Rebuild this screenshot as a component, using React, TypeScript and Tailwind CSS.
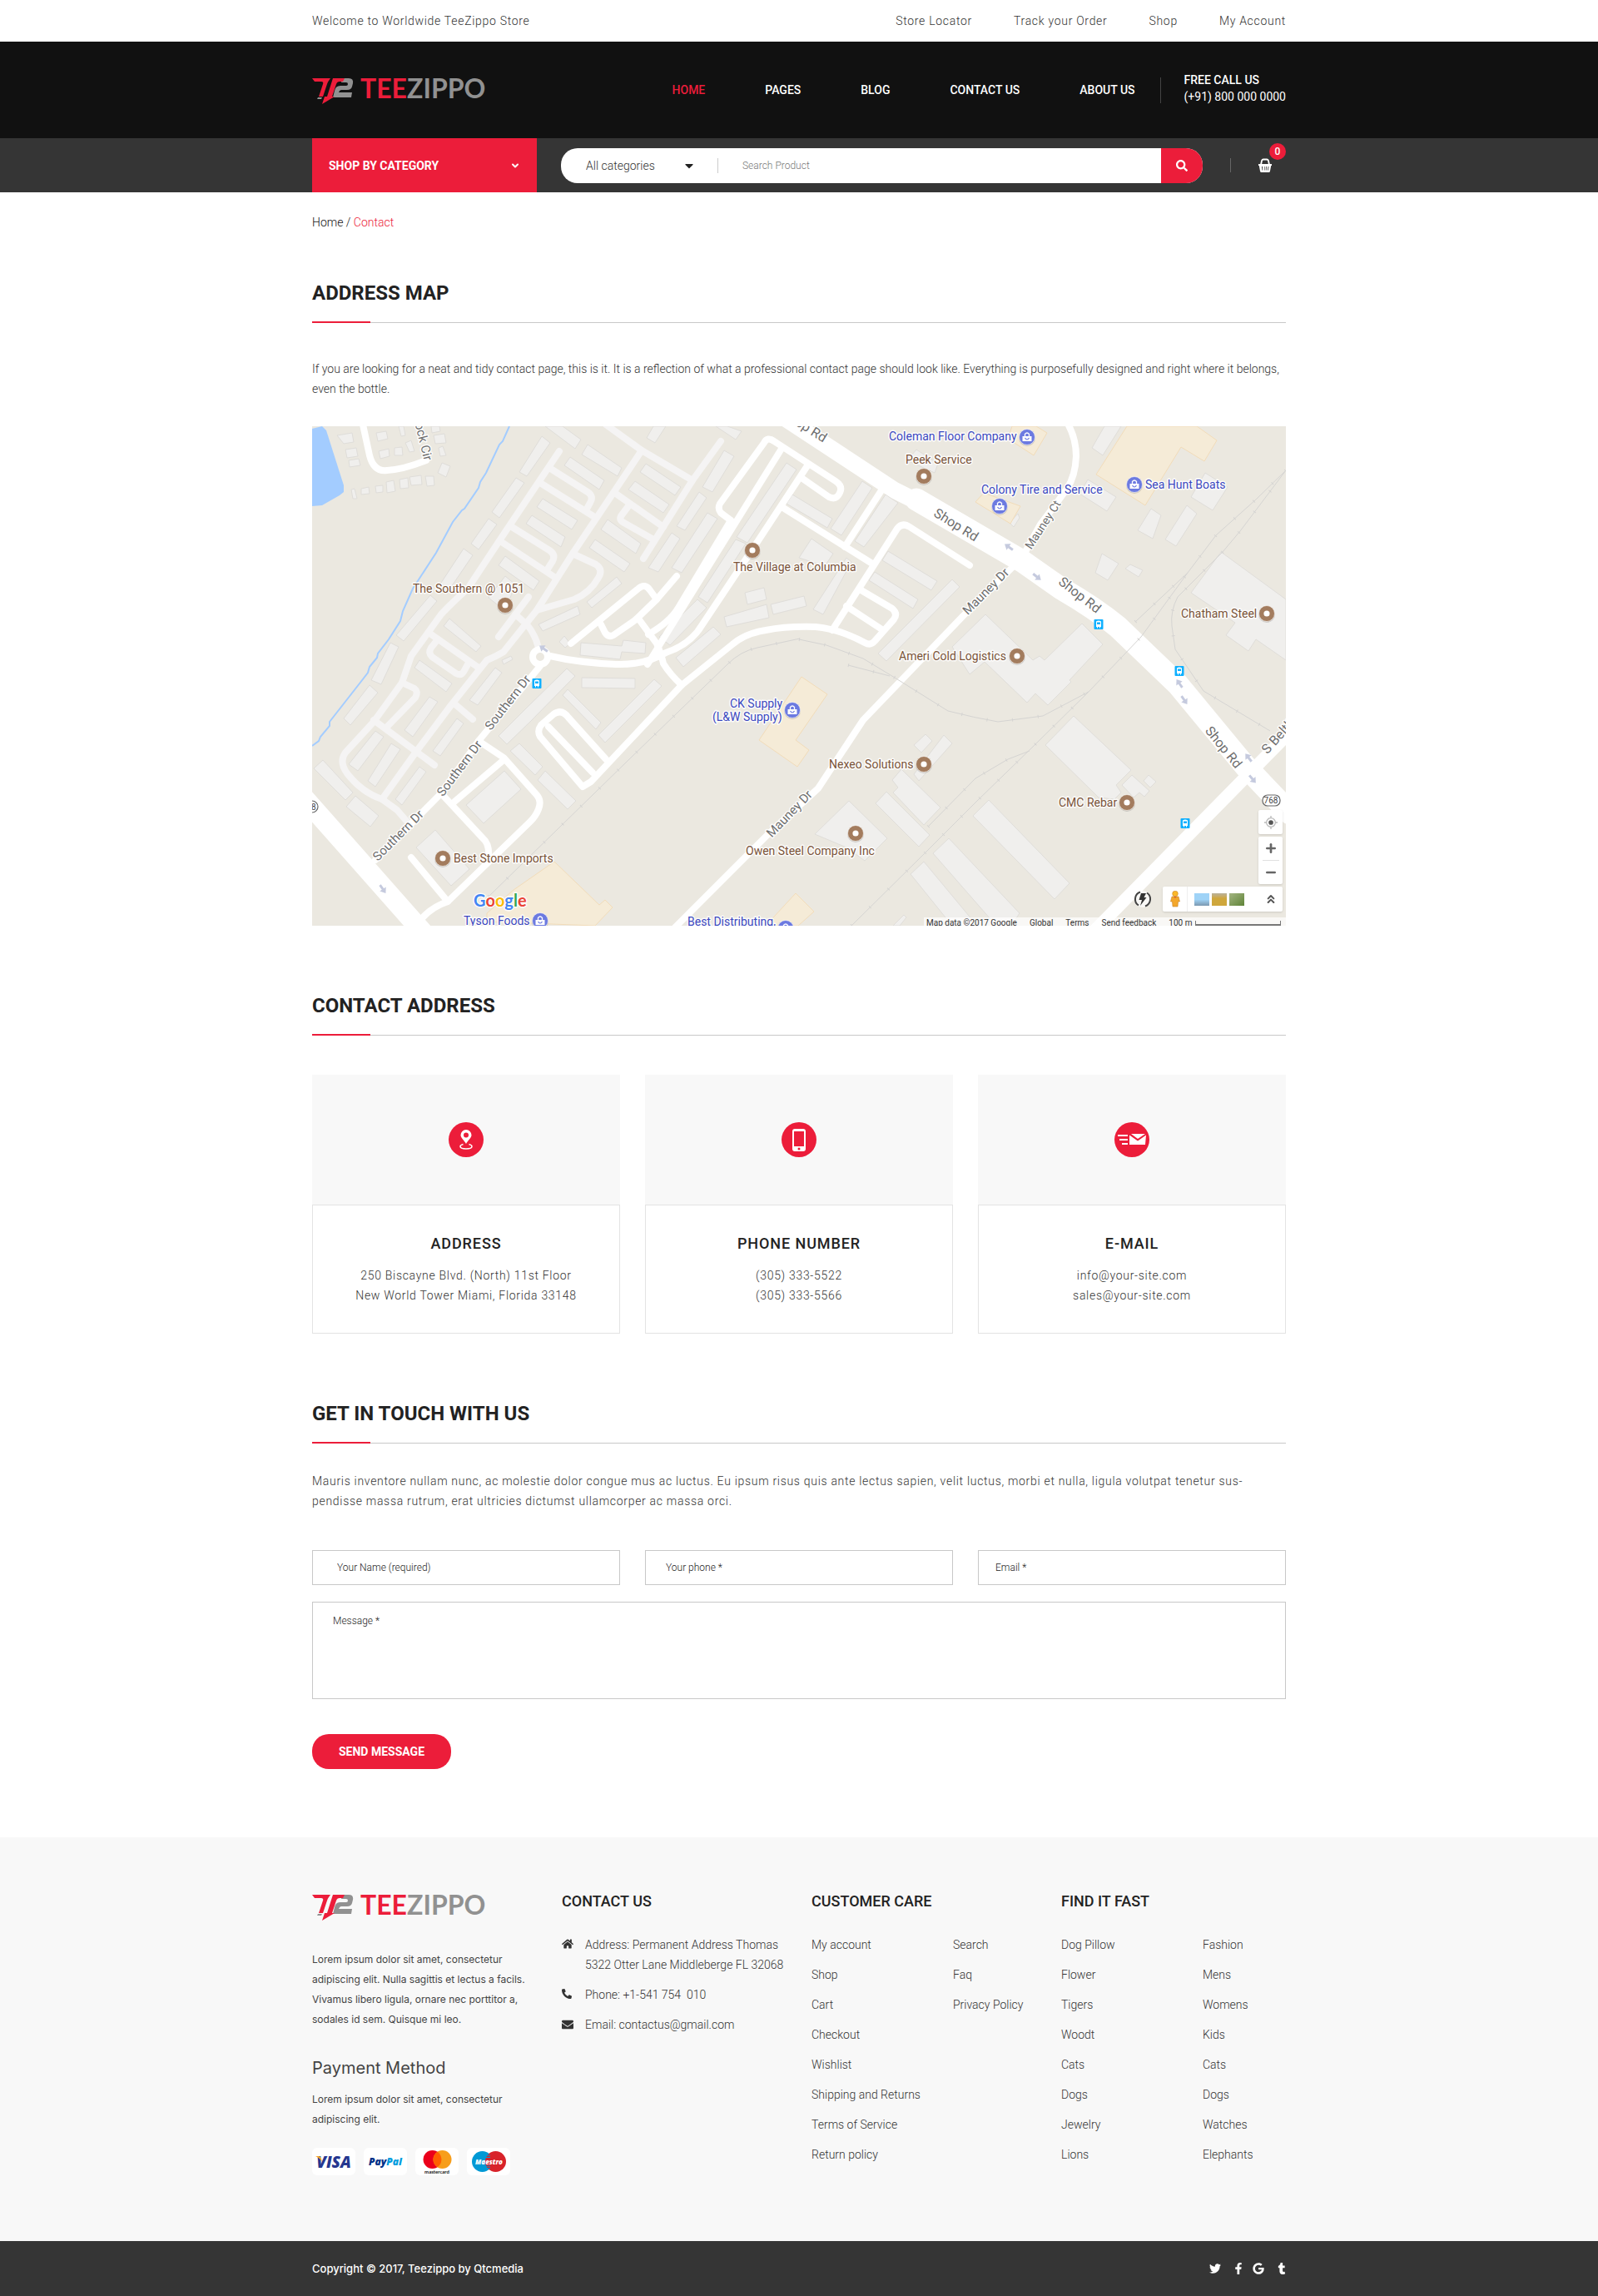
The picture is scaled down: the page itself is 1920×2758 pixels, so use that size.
import { useState, type ReactNode } from "react";
import {
  FaCaretDown,
  FaEnvelope,
  FaFacebookF,
  FaGoogle,
  FaHome,
  FaPhoneAlt,
  FaSearch,
  FaTumblr,
  FaTwitter,
} from "react-icons/fa";
import { ChevronDown, ChevronsUp, Minus, Plus } from "lucide-react";

const TOP_LINKS = ["Store Locator", "Track your Order", "Shop", "My Account"];

const NAV_LINKS = ["HOME", "PAGES", "BLOG", "CONTACT US", "ABOUT US"];

const CUSTOMER_CARE = [
  [
    "My account",
    "Shop",
    "Cart",
    "Checkout",
    "Wishlist",
    "Shipping and Returns",
    "Terms of Service",
    "Return policy",
  ],
  ["Search", "Faq", "Privacy Policy"],
];

const FIND_IT_FAST = [
  ["Dog Pillow", "Flower", "Tigers", "Woodt", "Cats", "Dogs", "Jewelry", "Lions"],
  ["Fashion", "Mens", "Womens", "Kids", "Cats", "Dogs", "Watches", "Elephants"],
];

/* ---------- map data, in a 1170 x 600 space ---------- */

const BUILDINGS = [
  "276,12 286,20 258,60 249,55",
  "245,62 255,68 225,110 216,103",
  "212,111 222,118 200,148 191,141",
  "182,147 193,155 165,196 153,191",
  "142,203 150,210 110,258 101,251",
  "280,0 301,0 323,16 316,27",
  "331,22 372,50 367,60 324,34",
  "310,37 351,65 345,76 303,47",
  "277,87 319,113 312,124 270,97",
  "264,107 304,133 299,145 257,117",
  "232,156 273,186 266,197 224,167",
  "401,45 443,73 436,83 394,55",
  "388,66 429,94 422,104 380,76",
  "355,112 395,141 389,153 347,124",
  "340,136 382,165 375,175 333,146",
  "495,29 507,36 481,79 469,73",
  "465,79 474,86 448,125 438,120",
  "475,104 487,111 444,176 432,170",
  "432,128 442,135 416,175 404,170",
  "570,44 582,52 523,140 510,133",
  "509,136 521,141 475,212 464,205",
  "463,208 474,218 430,263 417,253",
  "366,181 372,189 336,218 330,211",
  "319,216 322,226 277,246 272,238",
  "520,200 543,194 546,208 523,214",
  "551,214 591,204 594,216 554,226",
  "495,229 546,214 549,230 498,241",
  "577,82 625,111 619,122 570,93",
  "30,11 48,8 50,19 38,21",
  "40,28 53,26 55,36 42,38",
  "44,41 56,39 58,47 45,49",
  "77,8 89,6 91,15 79,18",
  "80,30 92,27 93,36 82,39",
  "99,26 108,25 109,35 99,35",
  "112,20 119,17 123,30 117,31",
  "104,0 110,0 112,11 107,12",
  "146,11 159,9 161,20 148,21",
  "143,0 153,0 154,6 144,8",
  "156,44 166,48 161,61 151,56",
  "152,26 157,24 161,35 154,36",
  "89,67 98,65 100,78 90,80",
  "105,64 115,62 116,74 106,75",
  "117,61 131,59 132,70 119,71",
  "136,60 146,60 147,71 138,72",
  "59,75 68,73 69,81 59,82",
  "76,72 85,71 85,79 77,80",
  "47,76 51,75 54,87 49,87",
  "410,0 425,0 412,20 402,14",
  "485,0 499,0 516,6 509,16",
  "661,66 673,74 636,131 623,123",
  "689,82 704,92 663,145 652,138",
  "600,135 626,153 616,168 585,158",
  "642,158 648,163 614,226 602,220",
  "692,150 751,186 744,197 685,161",
  "676,175 728,208 722,219 669,185",
  "769,184 778,193 690,282 680,273",
  "726,28 752,45 748,56 715,41",
  "952,0 972,0 950,35 937,26",
  "932,64 966,85 955,102 922,81",
  "1073,56 1100,73 1082,101 1056,85",
  "1051,95 1063,105 1038,144 1025,136",
  "1008,99 1020,107 1010,135 992,125",
  "949,153 969,165 956,185 941,176",
  "983,166 998,173 993,181 977,171",
  "848,105 850,110 843,121 838,116",
  "1092,151 1170,208 1170,281 1134,256 1125,270 1098,251 1109,236 1056,200",
  "809,226 769,265 790,298 808,283 859,332 869,321 884,335 912,307 910,305 950,262 925,237 880,281 874,276 866,281",
  "915,348 984,413 966,431 972,440 964,448 945,446 881,383",
  "985,419 1006,438 1000,445 994,440 987,446 973,431",
  "1005,419 1014,427 1007,434 999,426",
  "813,449 910,549 892,568 794,468",
  "765,495 850,585 840,600 822,600 746,513",
  "735,523 799,600 769,600 719,538",
  "711,587 714,590 706,600 698,600",
  "737,370 745,378 732,392 723,383",
  "759,371 769,381 729,426 723,418",
  "708,412 755,458 735,479 698,440 704,434 697,425",
  "690,439 742,491 729,505 677,453",
  "645,450 691,495 664,522 642,506 604,490",
  "94,260 104,265 83,310 71,305",
  "69,311 79,320 46,359 38,351",
  "165,231 203,264 197,271 158,240",
  "129,281 168,309 161,319 123,290",
  "220,290 228,296 199,335 189,329",
  "141,325 151,331 121,373 111,365",
  "174,351 182,357 154,396 145,390",
  "76,366 86,373 55,414 44,406",
  "95,381 106,388 76,433 67,426",
  "129,409 137,415 108,455 100,448",
  "13,401 49,440 40,449 2,411",
  "52,444 80,468 70,481 41,457",
  "323,260 372,264 374,257 401,260 400,273 372,271 370,280 322,275",
  "324,302 388,303 388,315 324,314",
  "303,252 310,261 304,266 297,259",
  "411,304 420,312 352,380 344,371",
  "307,316 347,356 341,364 301,323",
  "306,291 316,300 262,355 234,382 224,372 258,338",
  "249,381 277,409 268,419 238,390",
  "280,414 317,450 307,460 271,425",
  "231,414 251,436 206,477 185,455",
  "148,485 189,532 167,552 125,506",
  "482,241 491,250 446,289 437,278",
  "228,281 239,276 241,280 230,286",
  "212,206 232,180 244,190 232,222",
];

const SHOPS = [
  "979,0 1063,0 1087,17 1072,42 1044,25 1001,95 942,58",
  "841,0 870,0 883,8 867,35 836,15",
  "807,80 851,96 839,117 797,91",
  "588,301 619,322 581,377 597,389 583,409 537,377",
  "291,523 345,575 352,569 361,578 340,600 210,595 210,585 242,557",
  "581,561 603,583 584,600 545,600",
];

const PALE_ROADS = [
  "M353,-2 396,29 457,65",
  "M491,18 457,65 398,159",
  "M396,29 313,153 270,221 230,271Q220,277 210,281L202,291 167,335 125,391 84,448",
  "M297,30 230,130 187,195Q165,215 155,226L119,276 108,308 74,355 40,392Q32,403 42,417 60,440 84,448L102,461 115,476",
  "M285,50 331,79Q339,84 334,92L329,101",
  "M274,68 341,110",
  "M240,121 285,149Q293,154 289,162L282,173",
  "M226,138 291,181",
  "M313,153 341,166Q350,172 344,182 334,200 315,208L270,221",
  "M365,81 422,121",
  "M380,96 371,108Q369,112 373,115L410,136",
  "M260,205 224,253",
  "M244,226 258,238Q268,250 272,266",
  "M143,250 200,290",
  "M151,256 143,266Q139,272 144,277L173,297Q179,300 182,295L187,286",
  "M108,308 123,315Q128,319 124,326L90,361",
  "M74,353 147,407",
  "M173,335 193,352",
];

const ROADS = [
  "M61,-2 69,35Q74,55 90,53 110,52 137,41",
  "M503,113 491,104Q487,99 490,93L543,20Q547,12 555,18L629,66Q638,72 634,80 630,89 621,85L588,62",
  "M564,27 403,286",
  "M596,46 531,145 469,238Q455,262 425,272 400,287 365,286 320,284 286,276",
  "M503,113 440,218Q430,235 404,250",
  "M566,98 673,165",
  "M688,71 640,145",
  "M790,167 718,121Q709,115 703,123L625,245",
  "M658,196 697,219Q704,225 699,232L676,258Q671,264 664,260 635,244 605,241 570,240 545,245 520,249 505,262L444,311 335,427 325,433 274,373Q270,366 275,359L290,346Q300,339 308,350L353,400",
  "M642,216 686,245",
  "M284,361 337,416",
  "M438,180 414,208 388,233 362,251Q356,254 352,248L347,238",
  "M311,261 392,195Q400,188 406,197L414,208",
  "M392,231 414,261Q420,275 422,285 430,298 444,311",
  "M274,288 200,378 155,441 76,521",
  "M200,378 230,398 270,443Q276,450 272,460 269,468 262,475L163,571Q145,577 133,590",
  "M155,441 208,498Q213,505 212,517",
  "M230,401 171,451",
  "M119,518 163,571",
  "M853,158 782,228 662,353 608,435 547,491 436,602",
  "M853,158 875,118Q895,92 907,75 917,60 918,36 918,15 908,-3",
];

const RAILS = [
  "M585,256 618,263 662,279 700,302 764,342Q795,350 824,355L878,348 933,319 996,253 1052,176 1086,131 1134,88 1170,53",
  "M1170,53 1115,126 1094,151 1040,205Q1031,222 1033,240L1037,268 1071,318 1151,366",
  "M648,600 738,511 799,450 868,383 933,319",
  "M989,235 1052,176",
  "M644,287 694,300",
  "M740,481 797,423 836,400 862,390",
  "M212,565 380,401 499,286 Q515,270 535,266L586,255",
];

const PINS: [number, number][] = [
  [735, 60],
  [529, 149],
  [232, 215],
  [847, 276],
  [735, 406],
  [979, 452],
  [653, 489],
  [157, 519],
  [1147, 225],
];

const SHOP_PINS: [number, number][] = [
  [859, 13],
  [826, 96],
  [988, 70],
  [577, 341],
  [274, 594],
  [569, 603],
];

const BUS_STOPS: [number, number][] = [
  [945, 238],
  [270, 309],
  [1042, 294],
  [1049, 477],
];

const PLACES: [number, number, string][] = [
  [713, 45, "Peek Service"],
  [506, 174, "The Village at Columbia"],
  [121, 200, "The Southern @ 1051"],
  [705, 281, "Ameri Cold Logistics"],
  [621, 411, "Nexeo Solutions"],
  [897, 457, "CMC Rebar"],
  [521, 515, "Owen Steel Company Inc"],
  [170, 524, "Best Stone Imports"],
  [1044, 230, "Chatham Steel"],
];

const SHOP_NAMES: [number, number, string][] = [
  [693, 17, "Coleman Floor Company"],
  [804, 81, "Colony Tire and Service"],
  [1001, 75, "Sea Hunt Boats"],
  [502, 338, "CK Supply"],
  [481, 354, "(L&W Supply)"],
  [182, 599, "Tyson Foods"],
  [451, 600, "Best Distributing,"],
];

const STREETS: [number, number, number, number, string][] = [
  [239, 335, -52, 15, "Southern Dr"],
  [181, 414, -53, 15, "Southern Dr"],
  [107, 495, -45, 15, "Southern Dr"],
  [813, 202, -45, 15, "Mauney Dr"],
  [577, 469, -46, 15, "Mauney Dr"],
  [882, 121, -57, 14, "Mauney Ct"],
  [771, 123, 32, 16, "Shop Rd"],
  [919, 207, 38, 16, "Shop Rd"],
  [1091, 389, 51, 16, "Shop Rd"],
  [589, 4, 32, 16, "Shop Rd"],
  [1170, 370, -48, 16, "S Beltline"],
  [128, 15, 76, 15, "Rock Cir"],
];

const ARROWS: [number, number, number][] = [
  [837, 145, -145],
  [871, 181, 38],
  [1042, 309, -125],
  [1048, 329, 55],
  [1125, 398, -128],
  [1130, 424, 50],
  [278, 267, -145],
  [85, 556, 55],
];

function StoreMap() {
  return (
    <svg
      viewBox="0 0 1170 600"
      className="block w-full"
      role="img"
      aria-label="Map of the store's neighbourhood"
      fontFamily="Roboto, sans-serif"
    >
      <rect width="1170" height="600" fill="#ebe8e0" />
      <path d="M0,3 12,0 17,5 38,71V79L33,83 12,95 0,96Z" fill="#a3ccff" />
      <path
        d="M237,0 229,18 225,22 209,56 202,67 200,74 183,99 180,101 169,115 149,152 121,195 109,222 106,234 92,256 79,273 78,278 69,289 67,296 57,309 21,355 21,360 10,373 8,378 0,384"
        fill="none"
        stroke="#a3ccff"
        strokeWidth="2"
      />
      <g fill="#f0efed" stroke="#dfddd9" strokeWidth="1">
        {BUILDINGS.map((points) => (
          <polygon key={points} points={points} />
        ))}
      </g>
      <g fill="#f5ebd7" stroke="#f2dcb9" strokeWidth="1">
        {SHOPS.map((points) => (
          <polygon key={points} points={points} />
        ))}
      </g>
      <g fill="none" strokeLinecap="round" strokeLinejoin="round">
        <g stroke="#f5f4f4" strokeWidth="8">
          {PALE_ROADS.map((d) => (
            <path key={d} d={d} />
          ))}
        </g>
        <g stroke="#fff" strokeWidth="8">
          {ROADS.map((d) => (
            <path key={d} d={d} />
          ))}
          <circle cx="274" cy="277" r="9" fill="#ebe8e0" />
        </g>
        <g stroke="#fff">
          <path d="M560,-15 700,77 730,92" strokeWidth="20" />
          <path
            d="M726,88 853,162 900,195Q940,218 968,241L1040,310 1121,408 1175,465"
            strokeWidth="27"
          />
          <path d="M-10,446 135,610" strokeWidth="24" />
          <path d="M940,606 1128,415 1180,362" strokeWidth="15" />
        </g>
      </g>
      <g fill="none" stroke="#d5d4d2" strokeWidth="1">
        {RAILS.map((d) => (
          <path key={d} d={d} />
        ))}
      </g>
      <g fill="none" stroke="#d5d4d2" strokeWidth="4" strokeDasharray="1 30">
        {RAILS.map((d) => (
          <path key={d} d={d} />
        ))}
      </g>
      {ARROWS.map(([x, y, angle]) => (
        <path
          key={`${x}-${y}`}
          transform={`translate(${x} ${y}) rotate(${angle})`}
          d="M-6,-1.5H0V-4.5L6,0 0,4.5V1.5H-6Z"
          fill="#c5cade"
        />
      ))}

      {BUS_STOPS.map(([x, y]) => (
        <g key={`${x}-${y}`} transform={`translate(${x} ${y})`}>
          <rect x="-5.5" y="-6" width="11" height="12" rx="1" fill="#0fb0ff" />
          <path d="M-3,-3.5Q0,-5.5 3,-3.5V3H2V4.5H1V3H-1V4.5H-2V3H-3Z" fill="#fff" />
          <path d="M-2,-2.5H2V0H-2Z" fill="#0fb0ff" />
        </g>
      ))}
      {PINS.map(([x, y]) => (
        <g key={`${x}-${y}`}>
          <circle cx={x} cy={y + 1} r="10" fill="#000" opacity="0.15" />
          <circle cx={x} cy={y} r="9.5" fill="#a37c5e" stroke="#fff" strokeWidth="0.6" />
          <circle cx={x} cy={y} r="3.6" fill="#fff" />
        </g>
      ))}
      {SHOP_PINS.map(([x, y]) => (
        <g key={`${x}-${y}`} transform={`translate(${x} ${y})`}>
          <circle cy="1" r="10" fill="#000" opacity="0.15" />
          <circle r="9.5" fill="#6c7ae0" stroke="#fff" strokeWidth="0.6" />
          <path d="M-5.5,-1H5.5V5H-5.5Z" fill="#fff" />
          <path d="M-2.5,-1V-3.5Q0,-6.5 2.5,-3.5V-1" fill="none" stroke="#fff" strokeWidth="1.3" />
          <path d="M-2.5,1Q0,5 2.5,1" fill="none" stroke="#6c7ae0" strokeWidth="1.2" />
        </g>
      ))}

      <g stroke="#fff" strokeOpacity="0.85" strokeWidth="3" strokeLinejoin="round" paintOrder="stroke">
        <g fontSize="14" fill="#7a5338">
          {PLACES.map(([x, y, name]) => (
            <text key={name} x={x} y={y}>
              {name}
            </text>
          ))}
        </g>
        <g fontSize="14" fill="#3c48bf">
          {SHOP_NAMES.map(([x, y, name]) => (
            <text key={name} x={x} y={y}>
              {name}
            </text>
          ))}
        </g>
        <g fill="#6e6e6e" textAnchor="middle">
          {STREETS.map(([x, y, angle, size, name]) => (
            <text
              key={`${x}-${y}`}
              fontSize={size}
              transform={`translate(${x} ${y}) rotate(${angle})`}
            >
              {name}
            </text>
          ))}
        </g>
        <text x="194" y="577" fontSize="20" fontFamily="Lato, sans-serif" fontWeight="700">
          <tspan fill="#4285f4">G</tspan>
          <tspan fill="#ea4335">o</tspan>
          <tspan fill="#fbbc05">o</tspan>
          <tspan fill="#4285f4">g</tspan>
          <tspan fill="#34a853">l</tspan>
          <tspan fill="#ea4335">e</tspan>
        </text>
      </g>

      <g fill="#fff" stroke="#666" strokeWidth="1.2">
        <rect x="1142" y="443" width="21" height="13" rx="6" />
        <circle cx="0" cy="457" r="7" />
      </g>
      <g fontSize="10" fill="#444">
        <text x="1152" y="453" textAnchor="middle">
          768
        </text>
        <text x="-1" y="461">
          8
        </text>
      </g>
    </svg>
  );
}

function MapControls() {
  return (
    <>
      <div className="absolute right-1 bottom-[17px] flex flex-col items-end gap-[3px]">
        <button
          aria-label="Show my location"
          className="flex h-[29px] w-[29px] items-center justify-center rounded-xs bg-white shadow"
        >
          <svg viewBox="0 0 18 18" className="h-4 w-4">
            <circle cx="9" cy="9" r="6" fill="none" stroke="#bbb" strokeWidth="1.5" />
            <circle cx="9" cy="9" r="3.2" fill="#555" />
            <path d="M9,0V3M9,15V18M0,9H3M15,9H18" stroke="#bbb" strokeWidth="1.5" />
          </svg>
        </button>
        <div className="flex w-[29px] flex-col items-center rounded-xs bg-white shadow">
          <button aria-label="Zoom in" className="flex h-7 w-full items-center justify-center">
            <Plus className="h-4 w-4 text-[#666]" strokeWidth={4} />
          </button>
          <div className="h-px w-5 bg-[#e0e0e0]" />
          <button aria-label="Zoom out" className="flex h-7 w-full items-center justify-center">
            <Minus className="h-4 w-4 text-[#666]" strokeWidth={4} />
          </button>
        </div>
        <div className="flex items-center gap-3.5">
          <svg viewBox="0 0 20 20" className="h-5 w-5">
            <circle cx="10" cy="10" r="10" fill="#fff" opacity="0.7" />
            <path
              d="M7,1.5A9,9 0 0 0 5,17.5M13,18.5A9,9 0 0 0 15,2.5"
              fill="none"
              stroke="#444"
              strokeWidth="2"
            />
            <path d="M8,3H14L11.5,8H14.5L7,18 9,11H5.5Z" fill="#333" />
          </svg>
          <div className="flex h-[30px] w-36 items-center rounded-xs bg-white shadow">
            <button
              aria-label="Street View"
              className="flex h-full w-[30px] items-center justify-center border-r border-[#eee]"
            >
              <svg viewBox="0 0 12 20" className="h-5 w-3">
                <circle cx="6" cy="3.5" r="3.3" fill="#fbb829" stroke="#c8852c" strokeWidth="0.6" />
                <path
                  d="M2,7H10L11.5,13H9.5L9,19H3L2.5,13H0.5Z"
                  fill="#f3a72b"
                  stroke="#c8852c"
                  strokeWidth="0.6"
                />
                <path d="M4,7H8L6,9Z" fill="#d9622b" />
              </svg>
            </button>
            <div className="flex gap-[3px] pl-2">
              <div className="h-[15px] w-[18px] bg-linear-to-b from-[#9fd3f7] from-50% to-[#7b98b0]" />
              <div className="h-[15px] w-[18px] bg-linear-to-b from-[#b9b29a] to-[#cfa73c] to-40%" />
              <div className="h-[15px] w-[18px] bg-linear-to-br from-[#a3b481] to-[#5f8436]" />
            </div>
            <button aria-label="Show imagery" className="ml-auto pr-1.5">
              <ChevronsUp className="h-4 w-4 text-[#555]" strokeWidth={3} />
            </button>
          </div>
        </div>
      </div>
      <div className="absolute right-0 bottom-0 flex h-[10px] w-[435px] items-start gap-[15px] overflow-hidden bg-white/70 pl-[3px] text-[10px] leading-[14px] whitespace-nowrap text-[#333]">
        <span>Map data ©2017 Google</span>
        <a href="#global">Global</a>
        <a href="#terms">Terms</a>
        <a href="#feedback">Send feedback</a>
        <span className="flex flex-1 items-start gap-1">
          100 m
          <span className="mt-1 mr-1.5 h-1.5 flex-1 border-x border-b-2 border-[#777]" />
        </span>
      </div>
    </>
  );
}

function Logo() {
  return (
    <a href="#home" aria-label="TeeZippo" className="flex items-start gap-2 pt-1">
      <svg viewBox="0 0 50 32" className="h-8 w-[50px]">
        <path
          d="M36,0H44Q50,0 49,6L48,10Q47,14 42,14H35Q33,14 32,17H48L47,23H25L27,15Q28,9 34,9H41Q43,9 43,7T41,5H35Z"
          fill="#919191"
        />
        <path
          d="M0,0H22L20,3Q19,4 18,7L13,22H8L13,7Q14,4 11,4H3Z M25,0H39L37,4H33Q30,4 29,7L24,22H27L12,31 15,22H18L24,3Z"
          fill="#ec1d3a"
        />
        <path d="M7,23H12L11,25H6Z" fill="#919191" />
      </svg>
      <span className="-mt-1 font-[Lato] text-[32px] leading-8 font-bold text-[#919191]">
        <span className="text-[#ec1d3a]">TEE</span>ZIPPO
      </span>
    </a>
  );
}

function BasketIcon() {
  return (
    <svg viewBox="0 0 16 17" className="h-[17px] w-4">
      <path
        d="M3,8 4,3Q4.5,1.5 6,1.5H10Q11.5,1.5 12,3L13,8"
        fill="none"
        stroke="#fff"
        strokeWidth="1.8"
      />
      <path
        d="M0,7H16V9H15.2L14,15.5Q13.8,17 12.5,17H3.5Q2.2,17 2,15.5L0.8,9H0ZM4,10 4.5,14.5H5.3L5,10ZM7,10V14.5H7.6V10ZM9,10 8.8,14.5H9.6L9.8,10ZM11.6,10 11,14.5H11.8L12.4,10Z"
        fill="#fff"
        fillRule="evenodd"
      />
    </svg>
  );
}

function Container({ className = "", children }: { className?: string; children: ReactNode }) {
  return <div className={`mx-auto w-full max-w-[1170px] ${className}`}>{children}</div>;
}

function SectionTitle({ children }: { children: ReactNode }) {
  return (
    <div className="border-b border-[#c8c8c8]">
      <h2 className="text-2xl leading-8 font-bold text-[#222]">{children}</h2>
      <div className="mt-[18px] -mb-px h-0.5 w-[70px] bg-[#ec1d3a]" />
    </div>
  );
}

function ContactCard({
  title,
  lines,
  icon,
}: {
  title: string;
  lines: string[];
  icon: ReactNode;
}) {
  return (
    <div>
      <div className="flex h-[156px] items-center justify-center bg-[#f8f8f8]">
        <div className="flex h-[42px] w-[42px] items-center justify-center rounded-full bg-[#ec1d3a]">
          {icon}
        </div>
      </div>
      <div className="border border-[#e3e3e3] px-4 pt-[34px] pb-[33px] text-center">
        <h3 className="mb-3.5 text-lg leading-6 font-medium tracking-wider text-[#222]">{title}</h3>
        {lines.map((line) => (
          <p key={line} className="leading-6 font-light tracking-wider">
            {line}
          </p>
        ))}
      </div>
    </div>
  );
}

function LinkColumns({ title, columns }: { title: string; columns: string[][] }) {
  return (
    <div>
      <h3 className="text-lg leading-6 font-medium text-[#222]">{title}</h3>
      <div className="mt-7 flex">
        {columns.map((links, index) => (
          <ul key={index} className="w-[170px] shrink-0 last:w-auto">
            {links.map((link) => (
              <li key={link} className="mb-3 leading-6">
                <a href="#footer">{link}</a>
              </li>
            ))}
          </ul>
        ))}
      </div>
    </div>
  );
}

function PaymentCards() {
  return (
    <div className="mt-[22px] flex gap-2.5">
      <div className="flex h-[33px] w-[52px] items-center justify-center rounded-md bg-white">
        <svg viewBox="0 0 52 33" className="h-[33px] w-[52px]" role="img" aria-label="Visa">
          <text
            x="26"
            y="24"
            textAnchor="middle"
            fontFamily="Open Sans, sans-serif"
            fontSize="19"
            fontWeight="800"
            fontStyle="italic"
            fill="#26378f"
          >
            VISA
          </text>
          <path d="M4,10H8Q10,10 11,13L12,17Q9,12 4,10Z" fill="#f7a823" />
        </svg>
      </div>
      <div className="flex h-[33px] w-[52px] items-center justify-center rounded-md bg-white font-[Open_Sans] text-xs font-extrabold text-[#003087] italic">
        Pay<span className="text-[#009cde]">Pal</span>
      </div>
      <div className="flex h-[33px] w-[52px] items-center justify-center rounded-md bg-white">
        <svg viewBox="0 0 52 33" className="h-[33px] w-[52px]" role="img" aria-label="Mastercard">
          <circle cx="20.5" cy="14" r="11" fill="#eb001b" />
          <circle cx="32.5" cy="14" r="11" fill="#f79e1b" />
          <path d="M26.5,4.8A11,11 0 0 1 26.5,23.2A11,11 0 0 1 26.5,4.8Z" fill="#ff5f00" />
          <text
            x="26"
            y="31"
            textAnchor="middle"
            fontFamily="Lato, sans-serif"
            fontSize="6"
            fontWeight="700"
            fill="#111"
          >
            mastercard
          </text>
        </svg>
      </div>
      <div className="flex h-[33px] w-[52px] items-center justify-center rounded-md bg-white">
        <svg viewBox="0 0 52 33" className="h-[33px] w-[52px]" role="img" aria-label="Maestro">
          <circle cx="18.5" cy="16.5" r="12.5" fill="#0099d5" />
          <circle cx="34.5" cy="16.5" r="12.5" fill="#d8232a" />
          <path d="M23,9H28M22,11.5H28M22,22H28M23,24.5H28" stroke="#0099d5" strokeWidth="1" />
          <text
            x="26.5"
            y="20"
            textAnchor="middle"
            fontFamily="Open Sans, sans-serif"
            fontSize="8"
            fontWeight="800"
            fontStyle="italic"
            fill="#fff"
          >
            Maestro
          </text>
        </svg>
      </div>
    </div>
  );
}

function Header() {
  const [category, setCategory] = useState("all");

  return (
    <header>
      <Container className="flex h-[50px] items-center justify-between font-light tracking-wider">
        <p>Welcome to Worldwide TeeZippo Store</p>
        <nav className="flex gap-x-[50px]">
          {TOP_LINKS.map((link) => (
            <a key={link} href="#top">
              {link}
            </a>
          ))}
        </nav>
      </Container>

      <div className="bg-[#111]">
        <Container className="flex h-[116px] items-center justify-between text-white">
          <Logo />
          <div className="flex items-center">
            <nav className="flex gap-x-[72px] font-medium">
              {NAV_LINKS.map((link) => (
                <a key={link} href="#nav" className={link === "HOME" ? "text-[#ec1d3a]" : ""}>
                  {link}
                </a>
              ))}
            </nav>
            <div className="mr-7 ml-[30px] h-[31px] w-px bg-[#444]" />
            <div className="pb-1 leading-5">
              <p className="font-medium">FREE CALL US</p>
              <p>(+91) 800 000 0000</p>
            </div>
          </div>
        </Container>
      </div>

      <div className="bg-[#353535]">
        <Container className="flex h-[65px] items-center">
          <button className="flex h-full w-[270px] items-center justify-between bg-[#ec1d3a] px-5 font-bold text-white">
            SHOP BY CATEGORY
            <ChevronDown className="h-3 w-3" strokeWidth={4} />
          </button>
          <form className="ml-[29px] flex h-[42px] flex-1 items-center overflow-hidden rounded-[20px] bg-white">
            <div className="flex w-[189px] items-center border-r border-[#ccc] pl-[30px]">
              <select
                aria-label="Category"
                value={category}
                onChange={(e) => setCategory(e.target.value)}
                className="flex-1 appearance-none leading-[18px] font-light outline-none"
              >
                <option value="all">All categories</option>
                <option value="shirts">Shirts</option>
              </select>
              <FaCaretDown className="mr-[26px] h-4 w-4 text-[#222]" />
            </div>
            <input
              type="search"
              aria-label="Search Product"
              placeholder="Search Product"
              className="h-full flex-1 px-[29px] text-xs font-light outline-none placeholder:text-[#777]"
            />
            <button
              aria-label="Search"
              className="flex h-full w-[50px] items-center justify-center bg-[#ec1d3a] text-white"
            >
              <FaSearch className="h-3.5 w-3.5" />
            </button>
          </form>
          <div className="mx-[33px] h-[17px] w-px bg-[#666]" />
          <a href="#cart" aria-label="Cart" className="relative mr-[17px] text-white">
            <BasketIcon />
            <span className="absolute -top-[18px] left-[13px] flex h-5 w-5 items-center justify-center rounded-full bg-[#ec1d3a] text-xs font-medium">
              0
            </span>
          </a>
        </Container>
      </div>
    </header>
  );
}

function ContactForm() {
  const field =
    "h-[42px] w-full border border-[#c8c8c8] text-xs font-light outline-none placeholder:text-[#222]";

  return (
    <form className="mt-[47px]">
      <div className="grid grid-cols-3 gap-[30px]">
        <div>
          <label htmlFor="name" className="sr-only">
            Your Name
          </label>
          <input id="name" placeholder="Your Name (required)" className={`${field} px-[29px]`} />
        </div>
        <div>
          <label htmlFor="phone" className="sr-only">
            Your phone
          </label>
          <input id="phone" type="tel" placeholder="Your phone *" className={`${field} px-6`} />
        </div>
        <div>
          <label htmlFor="email" className="sr-only">
            Email
          </label>
          <input id="email" type="email" placeholder="Email *" className={`${field} px-5`} />
        </div>
      </div>
      <label htmlFor="message" className="sr-only">
        Message
      </label>
      <textarea
        id="message"
        placeholder="Message *"
        className="mt-5 block h-[117px] w-full resize-none border border-[#c8c8c8] px-6 py-3 text-xs leading-5 font-light outline-none placeholder:text-[#222]"
      />
      <button className="mt-[42px] h-[42px] rounded-[20px] bg-[#ec1d3a] px-8 font-bold text-white">
        SEND MESSAGE
      </button>
    </form>
  );
}

function Footer() {
  return (
    <footer id="footer">
      <div className="bg-[#f8f8f8] pt-[65px] pb-[79px]">
        <Container className="grid grid-cols-4 gap-x-[30px] font-light">
          <div className="font-[Inter] text-xs leading-6 font-normal text-[#444]">
            <Logo />
            <p className="mt-[34px]">
              Lorem ipsum dolor sit amet, consectetur adipiscing elit. Nulla sagittis et lectus a
              facils. Vivamus libero ligula, ornare nec porttitor a, sodales id sem. Quisque mi leo.
            </p>
            <h3 className="mt-[34px] mb-[14px] text-xl leading-6">Payment Method</h3>
            <p>Lorem ipsum dolor sit amet, consectetur adipiscing elit.</p>
            <PaymentCards />
          </div>

          <div>
            <h3 className="text-lg leading-6 font-medium text-[#222]">CONTACT US</h3>
            <ul className="mt-7 space-y-3 leading-6">
              <li className="flex gap-3.5">
                <FaHome className="mt-1 h-3.5 w-3.5 shrink-0" />
                <span>
                  Address: Permanent Address Thomas
                  <br />
                  5322 Otter Lane Middleberge FL 32068
                </span>
              </li>
              <li className="flex gap-3.5">
                <FaPhoneAlt className="mt-[5px] mr-0.5 h-3 w-3 shrink-0" />
                <span className="whitespace-pre">Phone: +1-541 754  010</span>
              </li>
              <li className="flex gap-3.5">
                <FaEnvelope className="mt-[5px] h-3.5 w-3.5 shrink-0" />
                <a href="mailto:contactus@gmail.com">Email: contactus@gmail.com</a>
              </li>
            </ul>
          </div>

          <LinkColumns title="CUSTOMER CARE" columns={CUSTOMER_CARE} />
          <LinkColumns title="FIND IT FAST" columns={FIND_IT_FAST} />
        </Container>
      </div>

      <div className="bg-[#353535] text-white">
        <Container className="flex h-[66px] items-center justify-between">
          <p className="font-[Inter] text-[13px] font-medium">
            Copyright © 2017, Teezippo by Qtcmedia
          </p>
          <div className="flex items-center">
            <a href="#twitter" aria-label="Twitter" className="mr-4">
              <FaTwitter className="h-3.5 w-3.5" />
            </a>
            <a href="#facebook" aria-label="Facebook" className="mr-3">
              <FaFacebookF className="h-3.5 w-2.5" />
            </a>
            <a href="#google" aria-label="Google" className="mr-4">
              <FaGoogle className="h-3.5 w-3.5" />
            </a>
            <a href="#tumblr" aria-label="Tumblr">
              <FaTumblr className="h-3.5 w-2.5" />
            </a>
          </div>
        </Container>
      </div>
    </footer>
  );
}

export default function App() {
  return (
    <div className="bg-white font-[Roboto,sans-serif] text-sm text-[#333]">
      <Header />

      <main>
        <Container>
          <nav aria-label="Breadcrumb" className="pt-6 leading-6 font-light text-[#111]">
            <a href="#home">Home</a> / <span className="text-[#ec1d3a]">Contact</span>
          </nav>

          <section className="pt-[57px]">
            <SectionTitle>ADDRESS MAP</SectionTitle>
            <p className="mt-[43px] leading-6 font-light">
              If you are looking for a neat and tidy contact page, this is it. It is a reflection of
              what a professional contact page should look like. Everything is purposefully designed
              and right where it belongs, even the bottle.
            </p>
            <div className="relative mt-[33px] overflow-hidden">
              <StoreMap />
              <MapControls />
            </div>
          </section>

          <section className="pt-20">
            <SectionTitle>CONTACT ADDRESS</SectionTitle>
            <div className="mt-[47px] grid grid-cols-3 gap-[30px]">
              <ContactCard
                title="ADDRESS"
                lines={[
                  "250 Biscayne Blvd. (North) 11st Floor",
                  "New World Tower Miami, Florida 33148",
                ]}
                icon={
                  <svg viewBox="0 0 16 24" className="h-6 w-4">
                    <path
                      d="M8,0A6.5,6.5 0 0 1 14.5,6.5C14.5,10 10,13 8,17C6,13 1.5,10 1.5,6.5A6.5,6.5 0 0 1 8,0ZM8,3.5A3,3 0 1 0 8,9.5A3,3 0 1 0 8,3.5Z"
                      fill="#fff"
                      fillRule="evenodd"
                    />
                    <path
                      d="M4.5,17.5Q1,18.5 1,20 1,23 8,23T15,20Q15,18.5 11.5,17.5"
                      fill="none"
                      stroke="#fff"
                      strokeWidth="1.5"
                    />
                  </svg>
                }
              />
              <ContactCard
                title="PHONE NUMBER"
                lines={["(305) 333-5522", "(305) 333-5566"]}
                icon={
                  <svg viewBox="0 0 16 27" className="h-[27px] w-4">
                    <path
                      d="M3,0H13A3,3 0 0 1 16,3V24A3,3 0 0 1 13,27H3A3,3 0 0 1 0,24V3A3,3 0 0 1 3,0ZM2,3V21H14V3ZM8,22.5A1.5,1.5 0 1 0 8,25.5A1.5,1.5 0 1 0 8,22.5Z"
                      fill="#fff"
                      fillRule="evenodd"
                    />
                  </svg>
                }
              />
              <ContactCard
                title="E-MAIL"
                lines={["info@your-site.com", "sales@your-site.com"]}
                icon={
                  <svg viewBox="0 0 34 14" className="h-3.5 w-[34px]">
                    <path d="M0,2H12M2,7H12M5,12H12" stroke="#fff" strokeWidth="2" />
                    <path d="M16,0H33L24,6Z" fill="#fff" />
                    <path d="M14,1.5 24,8.5 34,1.5 33,13H14Z" fill="#fff" />
                  </svg>
                }
              />
            </div>
          </section>

          <section className="pt-20 pb-[82px]">
            <SectionTitle>GET IN TOUCH WITH US</SectionTitle>
            <p className="mt-[33px] leading-6 font-light tracking-wider">
              Mauris inventore nullam nunc, ac molestie dolor congue mus ac luctus. Eu ipsum risus
              quis ante lectus sapien, velit luctus, morbi et nulla, ligula volutpat tenetur sus-
              <br />
              pendisse massa rutrum, erat ultricies dictumst ullamcorper ac massa orci.
            </p>
            <ContactForm />
          </section>
        </Container>
      </main>

      <Footer />
    </div>
  );
}
